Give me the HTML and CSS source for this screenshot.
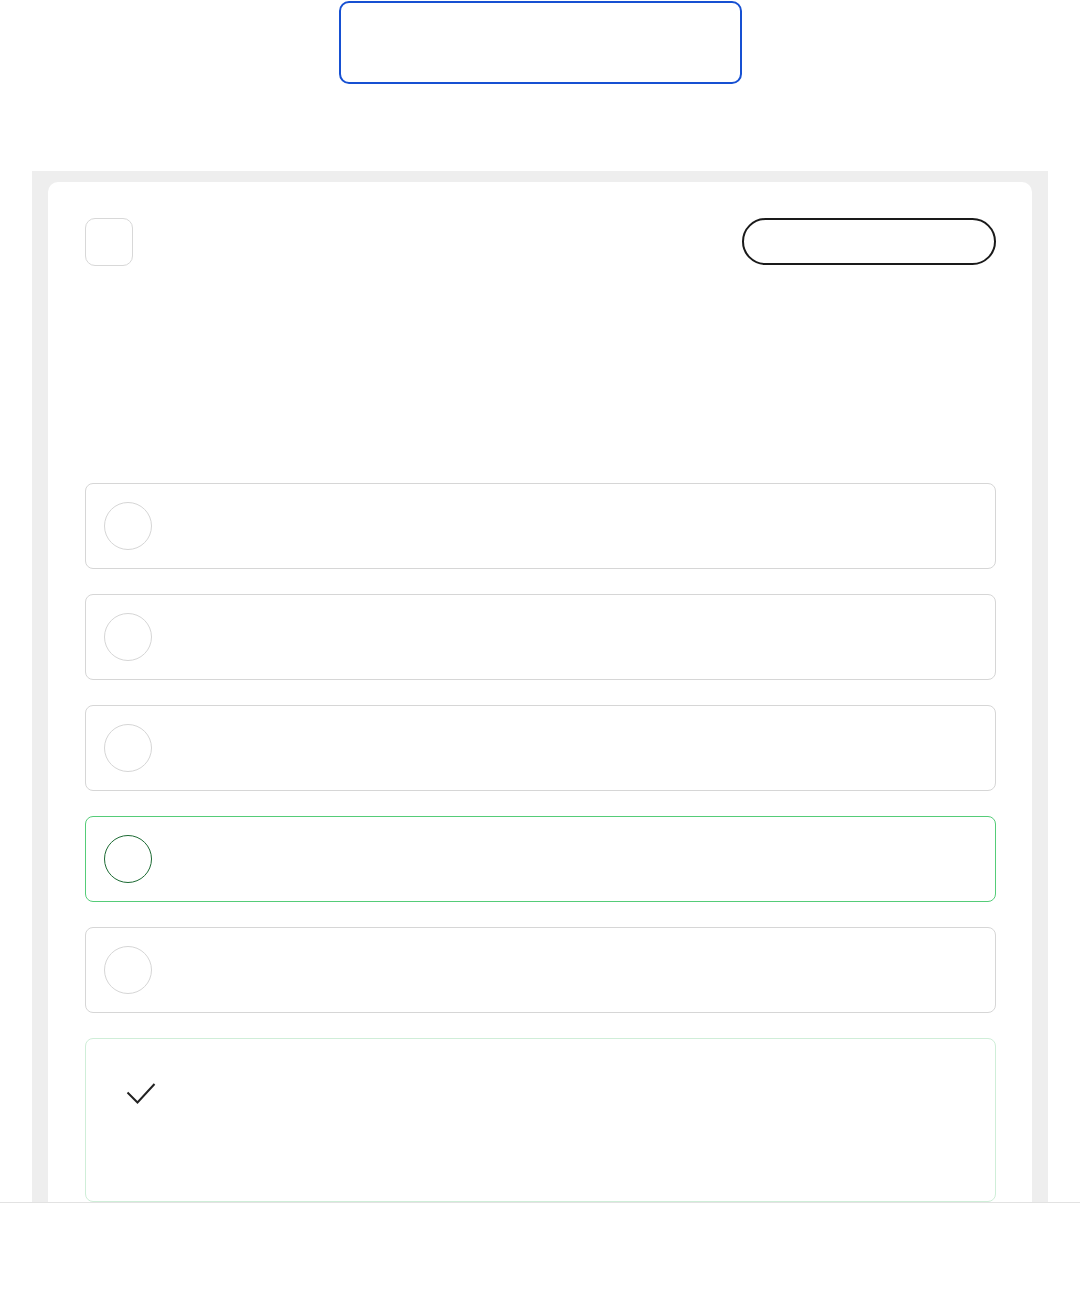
FILE: index.html
```html
<!DOCTYPE html>
<html lang="en">
<head>
  <meta charset="UTF-8">
  <title>Quiz</title>
  <link rel="stylesheet" href="styles.css">
</head>
<body>

<div class="top">
  <button class="top-btn" type="button"></button>
</div>

<div class="panel">
  <div class="card">
    <div class="card-head">
      <div class="flag"></div>
      <button class="pill" type="button"></button>
    </div>

    <div class="question"></div>

    <div class="options">
      <div class="option"><span class="radio"></span></div>
      <div class="option"><span class="radio"></span></div>
      <div class="option"><span class="radio"></span></div>
      <div class="option correct"><span class="radio"></span></div>
      <div class="option"><span class="radio"></span></div>
    </div>

    <div class="feedback">
      <svg class="check" width="30" height="22" viewBox="0 0 30 22">
        <polyline points="1.5,10.5 11.5,20.5 28.5,2" fill="none" stroke="#222" stroke-width="2" />
      </svg>
    </div>
  </div>
</div>

<div class="bottom-bar"></div>

</body>
</html>
```

FILE: styles.css
```css
body { margin: 0; font-family: "Inter", "Liberation Sans", sans-serif; background: #fff; }
button { font: inherit; background: #fff; cursor: pointer; }

.top { display: flex; justify-content: center; padding-top: 1px; }
.top-btn {
  width: 403px;
  height: 83px;
  margin-left: 1px;
  border: 2px solid #1650d2;
  border-radius: 10px;
}

.panel {
  margin: 87px 32px 0;
  padding: 11px 16px 0;
  background-color: #eeeeee;
}
.card {
  background: #fff;
  border-radius: 10px 10px 0 0;
  padding: 36px 36px 120px 37px;
}

.card-head { display: flex; justify-content: space-between; align-items: flex-start; }
.flag {
  width: 46px;
  height: 46px;
  border: 1px solid #d8d8d8;
  border-radius: 10px;
}
.pill {
  width: 254px;
  height: 47px;
  border: 2px solid #1a1a1a;
  border-radius: 24px;
}

.question { height: 217px; }

.options { display: flex; flex-direction: column; gap: 25px; }
.option {
  height: 84px;
  border: 1px solid #d6d6d6;
  border-radius: 8px;
  display: flex;
  align-items: center;
  padding: 0 18px;
}
.radio {
  width: 46px;
  height: 46px;
  border: 1px solid #d6d6d6;
  border-radius: 50%;
}
.option.correct { border: 1px solid #55cc78; }
.option.correct .radio { border-color: #1c6a33; }

.feedback {
  margin-top: 25px;
  height: 164px;
  border: 1px solid #cfeed8;
  border-radius: 8px;
  padding: 43px 40px;
  box-sizing: border-box;
}
.check { display: block; }

.bottom-bar {
  position: fixed;
  left: 0;
  right: 0;
  bottom: 0;
  height: 98px;
  background: #fff;
  border-top: 1px solid #e2e2e2;
}
```
